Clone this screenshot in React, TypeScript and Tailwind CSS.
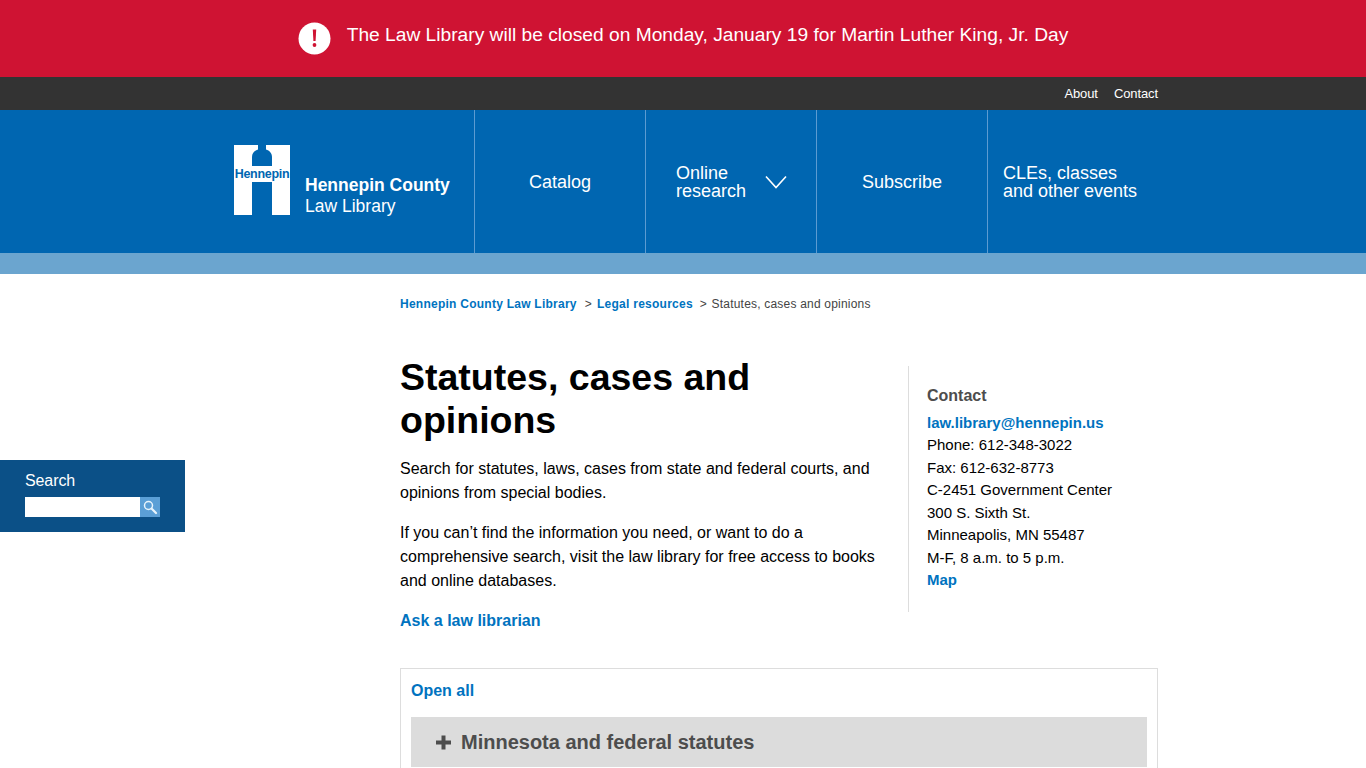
const navCell = "w-[171px] border-l border-[#5c9bd1] flex items-center text-white text-[18px] leading-[18px]";

function Logo() {
  return (
    <svg width="56" height="70" viewBox="0 0 56 70" className="shrink-0">
      <rect width="56" height="70" fill="#fff" />
      {/* bell shaped notch at the top, gap between the legs below */}
      <path d="M24 0H32V4.500C35.500 5.500 38 8 38 12V21H18V12C18 8 20.500 5.500 24 4.500Z" fill="#0066b1" />
      <rect x="18" y="37" width="20" height="33" fill="#0066b1" />
      <text x="28" y="33" textAnchor="middle" fill="#0066b1" fontSize="12.500" fontWeight="700" letterSpacing="-0.3" fontFamily="Liberation Sans, Arial, sans-serif">
        Hennepin
      </text>
    </svg>
  );
}

function SearchPanel() {
  return (
    <div className="absolute left-0 top-[460px] w-[185px] h-[72px] bg-[#0b5087] pl-[25px] pt-[11px]">
      <div className="text-white text-[16px] leading-[19px] tracking-[-0.1px]">Search</div>
      <div className="mt-[7px] flex w-[135px] h-[20px]">
        <div className="w-[115px] bg-white" />
        <div className="w-[20px] bg-[#5b9fd6] flex items-center justify-center">
          <svg width="16" height="16" viewBox="0 0 16 16" fill="none" stroke="#e8f4fc">
            <circle cx="6.500" cy="6.500" r="4" strokeWidth="1.500" />
            <path d="M9.500 9.500L14 14" strokeWidth="2.200" strokeLinecap="round" />
          </svg>
        </div>
      </div>
    </div>
  );
}

export default function App() {
  return (
    <div className="relative h-[768px] overflow-hidden bg-white font-['Liberation_Sans',Arial,sans-serif] text-black">
      {/* alert banner */}
      <div className="h-[77px] bg-[#cf1333] flex items-start justify-center pt-[22px]">
        <div className="flex items-start gap-[16px] text-white text-[19.200px] leading-[22px]">
          <svg width="33" height="33" viewBox="0 0 33 33">
            <circle cx="16.500" cy="16.500" r="16" fill="#fff" />
            <path d="M14.800 7.500H18.200L17.600 19H15.400Z" fill="#cf1333" />
            <circle cx="16.500" cy="23" r="1.900" fill="#cf1333" />
          </svg>
          <span className="mt-[2px]">The Law Library will be closed on Monday, January 19 for Martin Luther King, Jr. Day</span>
        </div>
      </div>

      {/* utility links */}
      <div className="h-[33px] bg-[#333333]">
        <div className="w-[950px] ml-[208px] h-full flex items-center justify-end gap-[16px] text-white text-[13px] tracking-[-0.1px]">
          <span>About</span>
          <span>Contact</span>
        </div>
      </div>

      {/* main nav */}
      <div className="h-[143px] bg-[#0066b1]">
        <div className="w-[950px] ml-[208px] h-full flex">
          <div className="w-[266px] pl-[26px] pt-[35px] flex items-start">
            <Logo />
            <div className="ml-[15px] mt-[29px] text-white">
              <div className="text-[17.500px] leading-[22px] font-bold">Hennepin County</div>
              <div className="text-[17.500px] leading-[20px]">Law Library</div>
            </div>
          </div>
          <div className={`${navCell} justify-center`}>Catalog</div>
          <div className={`${navCell} pl-[30px]`}>
            <span>
              Online
              <br />
              research
            </span>
            <svg width="22" height="14" viewBox="0 0 22 14" fill="none" stroke="#fff" strokeWidth="1.600" className="ml-[19px]">
              <path d="M1 1.500L11 12.500L21 1.500" />
            </svg>
          </div>
          <div className={`${navCell} justify-center`}>Subscribe</div>
          <div className={`${navCell} pl-[15px]`}>
            <span>
              CLEs, classes
              <br />
              and other events
            </span>
          </div>
        </div>
      </div>
      <div className="h-[21px] bg-[#6ba5cf]" />

      <SearchPanel />

      {/* content */}
      <div className="w-[758px] ml-[400px]">
        <div className="pt-[22px] flex items-center text-[12px] leading-[16px] tracking-[0.25px] text-[#444444]">
          <span className="font-bold text-[#0073c0]">Hennepin County Law Library</span>
          <span className="ml-[8px]">&gt;</span>
          <span className="ml-[5px] font-bold text-[#0073c0]">Legal resources</span>
          <span className="ml-[7px]">&gt;</span>
          <span className="ml-[4.500px] tracking-[0.2px]">Statutes, cases and opinions</span>
        </div>

        <div className="flex mt-[44px]">
          <div className="w-[508px] pr-[30px]">
            <h1 className="text-[37.500px] leading-[43px] font-bold">Statutes, cases and opinions</h1>
            <p className="mt-[15px] text-[16px] leading-[24px]">
              Search for statutes, laws, cases from state and federal courts, and opinions from special bodies.
            </p>
            <p className="mt-[16px] text-[16px] leading-[24px]">
              If you can’t find the information you need, or want to do a comprehensive search, visit the law library for free access to books and online databases.
            </p>
            <p className="mt-[16px] text-[16px] leading-[24px] font-bold text-[#0073c0]">Ask a law librarian</p>
          </div>
          <div className="w-[250px] h-[246px] mt-[10px] border-l border-[#dddddd] pl-[18px] pt-[20px] text-[15px] leading-[22.500px]">
            <div className="text-[16px] leading-[20px] font-bold text-[#4d4d4d]">Contact</div>
            <div className="mt-[5.500px] text-[#0073c0] font-bold">law.library@hennepin.us</div>
            <div>Phone: 612-348-3022</div>
            <div>Fax: 612-632-8773</div>
            <div>C-2451 Government Center</div>
            <div>300 S. Sixth St.</div>
            <div>Minneapolis, MN 55487</div>
            <div>M-F, 8 a.m. to 5 p.m.</div>
            <div className="text-[#0073c0] font-bold">Map</div>
          </div>
        </div>

        {/* accordion */}
        <div className="mt-[35px] border border-[#dddddd] px-[10px] pt-[12px] h-[200px]">
          <div className="text-[16px] leading-[20px] font-bold text-[#0073c0]">Open all</div>
          <div className="mt-[16px] h-[50px] bg-[#dcdcdc] flex items-center pl-[25px] text-[#4d4d4d]">
            <svg width="15" height="15" viewBox="0 0 15 15" fill="#4d4d4d" className="mt-[1px]">
              <path d="M5.500 0.500H9.500V5.500H15V9.500H9.500V14.500H5.500V9.500H0V5.500H5.500Z" />
            </svg>
            <span className="ml-[10px] text-[20px] font-bold">Minnesota and federal statutes</span>
          </div>
        </div>
      </div>
    </div>
  );
}
